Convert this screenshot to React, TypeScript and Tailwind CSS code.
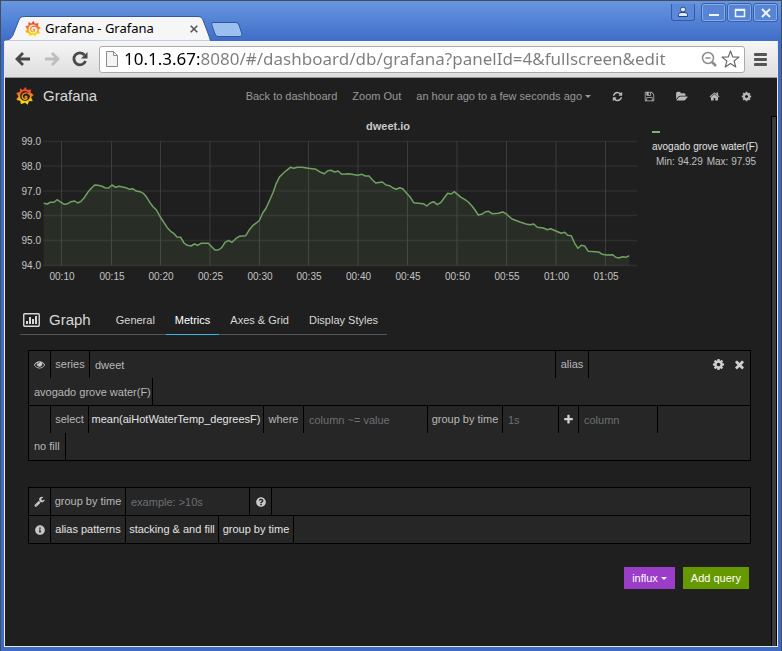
import type { ReactNode } from "react";
import { FaInfoCircle, FaQuestionCircle } from "react-icons/fa";

const ICONS = {
  refresh:
    "M1639 1056q0 5-1 7-64 268-268 434.5t-478 166.5q-146 0-282.5-55t-243.5-157l-129 129q-19 19-45 19t-45-19-19-45v-448q0-26 19-45t45-19h448q26 0 45 19t19 45-19 45l-137 137q71 66 161 102t187 36q134 0 250-65t186-179q11-17 53-117 8-23 30-23h192q13 0 22.5 9.5t9.5 22.5zm25-800v448q0 26-19 45t-45 19h-448q-26 0-45-19t-19-45 19-45l138-138q-148-137-349-137-134 0-250 65t-186 179q-11 17-53 117-8 23-30 23h-199q-13 0-22.5-9.5t-9.5-22.5v-7q65-268 270-434.5t480-166.5q146 0 284 55.5t245 156.5l130-129q19-19 45-19t45 19 19 45z",
  save: "M512 1536h768v-384h-768v384zm896 0h128v-896q0-14-10-38.5t-20-34.5l-281-281q-10-10-34-20t-39-10v416q0 40-28 68t-68 28h-576q-40 0-68-28t-28-68v-416h-128v1280h128v-416q0-40 28-68t68-28h832q40 0 68 28t28 68v416zm-384-928v-320q0-13-9.5-22.5t-22.5-9.5h-192q-13 0-22.5 9.5t-9.5 22.5v320q0 13 9.5 22.5t22.5 9.5h192q13 0 22.5-9.5t9.5-22.5zm640 32v928q0 40-28 68t-68 28h-1344q-40 0-68-28t-28-68v-1344q0-40 28-68t68-28h928q40 0 88 20t76 48l280 280q28 28 48 76t20 88z",
  folder:
    "M1815 952q0 31-31 66l-336 396q-43 51-120.5 86.5t-143.5 35.5h-1088q-34 0-60.5-13t-26.5-43q0-31 31-66l336-396q43-51 120.5-86.5t143.5-35.5h1088q34 0 60.5 13t26.5 43zm-343-344v160h-832q-94 0-197 47.5t-164 119.5l-337 396-5 6q0-4-.5-12.5t-.5-12.5v-960q0-92 66-158t158-66h320q92 0 158 66t66 158v32h544q92 0 158 66t66 158z",
  home: "M1472 992v480q0 26-19 45t-45 19h-384v-384h-256v384h-384q-26 0-45-19t-19-45v-480q0-1 .5-3t.5-3l575-474 575 474q1 2 1 6zm223-69l-62 74q-8 9-21 11h-3q-13 0-21-7l-692-577-692 577q-12 8-24 7-13-2-21-11l-62-74q-8-10-7-23.5t11-21.5l719-599q32-26 76-26t76 26l244 204v-195q0-14 9-23t23-9h192q14 0 23 9t9 23v408l219 182q10 8 11 21.5t-7 23.5z",
  cog: "M1152 896q0-106-75-181t-181-75-181 75-75 181 75 181 181 75 181-75 75-181zm512-109v222q0 12-8 23t-20 13l-185 28q-19 54-39 91 35 50 107 138 10 12 10 25t-9 23q-27 37-99 108t-94 71q-12 0-26-9l-138-108q-44 23-91 38-16 136-29 186-7 28-36 28h-222q-14 0-24.5-8.5t-11.5-21.5l-28-184q-49-16-90-37l-141 107q-10 9-25 9-14 0-25-11-126-114-165-168-7-10-7-23 0-12 8-23 15-21 51-66.5t54-70.5q-27-50-41-99l-183-27q-13-2-21-12.5t-8-23.5v-222q0-12 8-23t19-13l186-28q14-46 39-92-40-57-107-138-10-12-10-24 0-10 9-23 26-36 98.5-107.5t94.5-71.5q13 0 26 10l138 107q44-23 91-38 16-136 29-186 7-28 36-28h222q14 0 24.5 8.5t11.5 21.5l28 184q49 16 90 37l142-107q9-9 24-9 13 0 25 10 129 119 165 170 7 8 7 22 0 12-8 23-15 21-51 66.5t-54 70.5q26 50 41 98l183 28q13 2 21 12.5t8 23.5z",
  times:
    "M1490 1322q0 40-28 68l-136 136q-28 28-68 28t-68-28l-294-294-294 294q-28 28-68 28t-68-28l-136-136q-28-28-28-68t28-68l294-294-294-294q-28-28-28-68t28-68l136-136q28-28 68-28t68 28l294 294 294-294q28-28 68-28t68 28l136 136q28 28 28 68t-28 68l-294 294 294 294q28 28 28 68z",
  plus: "M1600 736v192q0 40-28 68t-68 28h-416v416q0 40-28 68t-68 28h-192q-40 0-68-28t-28-68v-416h-416q-40 0-68-28t-28-68v-192q0-40 28-68t68-28h416v-416q0-40 28-68t68-28h192q40 0 68 28t28 68v416h416q40 0 68 28t28 68z",
  eye: "M1664 960q-152-236-381-353 61 104 61 225 0 185-131.5 316.5t-316.5 131.5-316.5-131.5-131.5-316.5q0-121 61-225-229 117-381 353 133 205 333.5 326.5t434.5 121.5 434.5-121.5 333.5-326.5zm-720-384q0-20-14-34t-34-14q-125 0-214.5 89.5t-89.5 214.5q0 20 14 34t34 14 34-14 14-34q0-86 61-147t147-61q20 0 34-14t14-34zm848 384q0 34-20 69-140 230-376.5 368.5t-499.5 138.5-499.5-139-376.5-368q-20-35-20-69t20-69q140-229 376.5-368t499.5-139 499.5 139 376.5 368q20 35 20 69z",
  wrench:
    "M448 1472q0-26-19-45t-45-19-45 19-19 45 19 45 45 19 45-19 19-45zm644-420l-682 682q-37 37-90 37-52 0-91-37l-106-108q-38-36-38-90 0-53 38-91l681-681q39 98 114.5 173.5t173.5 114.5zm634-435q0 39-23 106-47 134-164.5 217.5t-258.5 83.5q-185 0-316.5-131.5t-131.5-316.5 131.5-316.5 316.5-131.5q58 0 121.5 16.5t107.5 46.5q16 11 16 28t-16 28l-293 169v224l193 107q5-3 79-48.5t135.5-81 70.5-35.5q15 0 23.5 10t8.5 25z",
};

function Icon({ name, className = "size-[11px]" }: { name: keyof typeof ICONS; className?: string }) {
  return (
    <svg viewBox="0 0 1792 1792" fill="currentColor" className={`shrink-0 ${className}`} aria-hidden="true">
      <path d={ICONS[name]} />
    </svg>
  );
}

function Logo({ id, className }: { id: string; className: string }) {
  return (
    <svg viewBox="0 0 36 36" className={`shrink-0 ${className}`} aria-hidden="true">
      <defs>
        <linearGradient id={id} x1="0" y1="0" x2="0" y2="36" gradientUnits="userSpaceOnUse">
          <stop offset="0.1" stopColor="#e8402a" />
          <stop offset="0.5" stopColor="#f58a1f" />
          <stop offset="0.9" stopColor="#fde407" />
        </linearGradient>
      </defs>
      <g fill="none" stroke={`url(#${id})`}>
        <path
          fill={`url(#${id})`}
          fillRule="evenodd"
          strokeWidth="0.5"
          d="M8 3L14 6L19 0L22 6L30 5L29 11L35 16L30 20L33 28L26 28L23 35L18 31L10 34L9 28L1 25L5 19L1 12L8 10ZM18 8A10 10 0 1 0 28 19A10 10 0 0 0 18 8Z"
        />
        <path
          strokeWidth="2.8"
          strokeLinecap="round"
          d="M27 15C23 10 14 11 12.500 17C12 22 15 25 18.500 24.500C22 24 23 20 20.500 18.500C19 18 18 19 18.500 20.500"
        />
      </g>
    </svg>
  );
}

const Caret = () => (
  <span className="ml-[3px] inline-block border-x-[3px] border-t-[3px] border-x-transparent border-t-current align-middle" />
);

function WindowButton({ label, children }: { label: string; children: ReactNode }) {
  return (
    <button
      aria-label={label}
      className="flex h-[17px] w-[23px] items-center justify-center rounded-[2px] border border-[#86abe6] bg-[#5784d3] outline outline-[#365fae]"
    >
      <svg viewBox="0 0 14 12" className="h-3 w-3.5" fill="none" stroke="#eef4ff" strokeWidth="2">
        {children}
      </svg>
    </button>
  );
}

function TitleBar() {
  return (
    <div className="flex h-[39px] shrink-0 items-start justify-between">
      <div className="flex items-end self-end">
        <div className="relative h-[25px] w-[207px]">
          <svg viewBox="0 0 208 25" preserveAspectRatio="none" className="absolute inset-0 size-full" aria-hidden="true">
            <path d="M0 25C5 24 7 23 9 19L15 4C16 1 18 .5 21 .5H194C197 .5 199 1 200 4L206 20C207 23 207 24 208 25Z" fill="#f6f6f6" stroke="#31569e" />
            <path d="M1 25H207" stroke="#f6f6f6" />
          </svg>
          <div className="relative flex h-full items-center pl-[21px] pr-[11px]">
            <Logo id="tabLogo" className="size-4" />
            <span className="ml-1 flex-1 whitespace-nowrap font-['Noto_Sans',sans-serif] text-[13px] text-black">Grafana - Grafana</span>
            <button aria-label="Close tab" className="flex size-3 items-center justify-center">
              <svg viewBox="0 0 8 8" className="size-2" stroke="#555" strokeWidth="1.6">
                <path d="M.7.7L7.300 7.300M7.300.7L.7 7.300" />
              </svg>
            </button>
          </div>
        </div>
        <button aria-label="New tab" className="mb-1 h-[15px] w-8">
          <svg viewBox="0 0 32 15" className="h-[15px] w-8">
            <path d="M2 .5H25Q27 .5 28 3L31 12Q31.500 14.500 29 14.500H7Q5 14.500 4 12L.8 3Q.3.500 2 .5Z" fill="#9bc0f0" stroke="#31569e" />
          </svg>
        </button>
      </div>
      <div className="flex gap-[3px] pr-px pt-0.5">
        <button aria-label="Profile" className="mr-1 flex h-[17px] w-6 items-center justify-center rounded-b-[3px] border border-t-0 border-[#325aa8] bg-[#5b89d8]">
          <svg viewBox="0 0 12 12" className="size-3" fill="#dce8fb" stroke="#2b4478">
            <path d="M1.500 10.500V8.500Q1.500 7 4 6.500H8Q10.500 7 10.500 8.500V10.500Z" />
            <circle cx="6" cy="3.500" r="2.500" />
          </svg>
        </button>
        <WindowButton label="Minimize">
          <path d="M2 8H12" />
        </WindowButton>
        <WindowButton label="Maximize">
          <path d="M2.500 2.500H11.500V9.500H2.500Z" strokeWidth="1.500" />
          <path d="M2 3H12" />
        </WindowButton>
        <WindowButton label="Close">
          <path d="M3 2L11 10M11 2L3 10" />
        </WindowButton>
      </div>
    </div>
  );
}

function Toolbar() {
  return (
    <div className="flex h-[37px] shrink-0 items-center border-b border-[#9a9a9a] bg-linear-to-b from-[#f6f6f6] to-[#dedede] pl-2.5 pr-2.5">
      <button aria-label="Back">
        <svg viewBox="0 0 16 14" className="h-3.5 w-4" fill="none" stroke="#484848" strokeWidth="2.800">
          <path d="M15 7H2.500M8 1L2 7L8 13" />
        </svg>
      </button>
      <button aria-label="Forward" className="ml-[13px]">
        <svg viewBox="0 0 16 14" className="h-3.5 w-4" fill="none" stroke="#bdbdbd" strokeWidth="2.800">
          <path d="M1 7H13.500M8 1L14 7L8 13" />
        </svg>
      </button>
      <button aria-label="Reload" className="ml-3">
        <svg viewBox="0 0 16 16" className="size-4" fill="none" stroke="#484848" strokeWidth="2.800">
          <path d="M12.500 4A6 6 0 1 0 13.500 10" />
          <path d="M15.500 1V7.500H9Z" fill="#484848" stroke="none" />
        </svg>
      </button>
      <div className="ml-[11px] flex h-[27px] min-w-0 flex-1 items-center rounded-[3px] border border-[#aaa] bg-white pl-1.5 pr-1">
        <svg viewBox="0 0 12 16" className="h-4 w-3 shrink-0" fill="#f4f4f4" stroke="#8a8a8a">
          <path d="M.5.5H7.500L11.500 4.500V15.500H.5ZM7.500.5V4.500H11.500" />
        </svg>
        <input
          aria-label="Address"
          defaultValue="10.1.3.67:8080/#/dashboard/db/grafana?panelId=4&fullscreen&edit"
          className="ml-1.5 min-w-0 flex-1 bg-linear-to-r from-black from-[75px] to-[#7d7d7d] to-[75px] bg-clip-text font-['Noto_Sans',sans-serif] text-[17px] text-transparent caret-black outline-none"
        />
        <svg viewBox="0 0 16 16" className="size-4 shrink-0" fill="none" stroke="#8c8c8c" strokeWidth="1.500">
          <circle cx="7" cy="7" r="5.500" />
          <path d="M4.500 7H9.500" />
          <path d="M11 11L15 15" strokeWidth="2.500" />
        </svg>
        <button aria-label="Bookmark" className="ml-1">
          <svg viewBox="0 0 20 19" className="h-[18px] w-[19px]" fill="#fff" stroke="#666" strokeWidth="1.200" strokeLinejoin="round">
            <path d="M10 1L12.300 7.200L19 7.500L13.800 11.600L15.600 18L10 14.300L4.400 18L6.200 11.600L1 7.500L7.700 7.200Z" />
          </svg>
        </button>
      </div>
      <button aria-label="Menu" className="ml-[9px] flex w-[13px] flex-col gap-0.5">
        <span className="h-[3px] rounded-[1px] bg-[#555]" />
        <span className="h-[3px] rounded-[1px] bg-[#555]" />
        <span className="h-[3px] rounded-[1px] bg-[#555]" />
      </button>
    </div>
  );
}

function NavBar() {
  return (
    <nav className="flex h-9 items-center pl-[11px] pr-[19px] text-[#999]">
      <Logo id="navLogo" className="size-[18px]" />
      <span className="ml-[9px] flex-1 text-[15px] text-[#d8d8d8]">Grafana</span>
      <a href="#dashboard">Back to dashboard</a>
      <a href="#zoom" className="ml-[15px]">Zoom Out</a>
      <button className="ml-[15px]">
        an hour ago to a few seconds ago
        <Caret />
      </button>
      <div className="ml-[21px] flex gap-[21px] text-[#b8b8b8]">
        <button aria-label="Refresh"><Icon name="refresh" /></button>
        <button aria-label="Save"><Icon name="save" /></button>
        <button aria-label="Open"><Icon name="folder" className="h-[11px] w-3" /></button>
        <button aria-label="Home"><Icon name="home" /></button>
        <button aria-label="Settings"><Icon name="cog" /></button>
      </div>
    </nav>
  );
}

const SERIES =
  "43.700,203.300 47.300,204 50,202.300 54,202.300 57,199.700 60,201.700 64.300,204.300 67.700,203.700 71,201.700 74.700,201 77.700,203 81,201.300 84.300,197.700 88,192 91.300,188.300 94.700,185 98,185.300 102,186.300 105,187.700 108.700,188 112,185 115.700,187.300 119,186.300 126,187.700 129.300,189.300 132.700,188.700 136,191 140,191.700 143.300,193.300 146.700,197.300 150,202.700 153.300,207 156.700,210.300 160.300,217 164,222.700 167.300,227.700 170.700,231.300 174,233.700 177,237 180.700,237.300 184,243 187.300,245.300 191,246 194.300,244 197.700,245.300 201,243.300 208.300,243.300 211.700,246.700 215,250 218.300,250 221.700,247.700 225,242.300 228.700,240.300 232,242.300 235.700,238.700 239.300,236.300 245.700,235.700 249,230.300 252.700,225.700 259.300,220.500 262.700,213 266,208.300 269.300,201 273,192.700 276.300,183.300 279.700,176.700 283.300,173.300 286.700,170.300 290.300,167.300 293.700,168.300 297.300,167.300 301.700,167.300 308.300,168.300 316,169.300 320.700,172.300 324.300,173.700 327.700,170.700 331,170.300 334.700,172 338,171 341.700,174.300 349,173.700 357.300,175.300 362,174.300 365.300,176 369,176 372.300,179.700 375.700,183 382.300,182 386,185 389.700,185.700 393,188 396.300,189.300 399.700,187.700 403,189 406.700,193.300 410.300,197.300 413.700,202.700 423.300,203.700 426.700,206 430.300,203 433.700,201.700 437.300,204.700 441,202.300 444.300,197.700 447.700,193.300 451.300,194 454.300,191.700 461,197.300 464.700,199.300 468.300,202 472,206 475,210 478.300,215 481.700,214.300 485,212 488.700,211.300 492,213.700 498.300,213.300 502.700,212 506,213.700 512,219 520,222 526,224 530,224.700 533.700,224 537.300,227.300 543.300,228 547.300,229.700 550.700,228.700 554.300,230.300 561,233.300 564.700,232.300 567.700,235.300 571.300,235.700 574.700,243.300 578,248.300 581.300,245.300 584.700,246 588.300,251.300 598.700,252 602.300,254.300 606.700,255 612.700,254.700 615.700,257.300 619,258 622.300,256.700 626,257.300 629.300,255.700";

const Y_TICKS = [
  [141.5, "99.0"], [166, "98.0"], [191, "97.0"], [215.5, "96.0"], [240.5, "95.0"], [265.5, "94.0"],
] as const;
const X_TICKS = [
  [61.5, "00:10"], [111.5, "00:15"], [160.5, "00:20"], [210, "00:25"], [259.5, "00:30"], [308.5, "00:35"],
  [358, "00:40"], [407.5, "00:45"], [457, "00:50"], [506.5, "00:55"], [556, "01:00"], [605.5, "01:05"],
] as const;

function Chart() {
  return (
    <svg viewBox="16 134 624 150" className="block w-full" fontSize="10" fill="#c4c4c4" role="img" aria-label="dweet.io graph">
      {Y_TICKS.map(([y, label]) => (
        <g key={label}>
          <path d={`M43 ${y}H637`} stroke="#2e2e2e" strokeWidth="1.600" />
          <text x="41" y={y + 3.5} textAnchor="end">{label}</text>
        </g>
      ))}
      {X_TICKS.map(([x, label]) => (
        <g key={label}>
          <path d={`M${x} 141V266`} stroke="#3d3d3d" />
          <text x={x + 0.5} y="280" textAnchor="middle">{label}</text>
        </g>
      ))}
      <polygon points={`43.700,265.500 ${SERIES} 629.300,265.500`} fill="#7eb26d" fillOpacity="0.1" />
      <polyline points={SERIES} fill="none" stroke="#6fa261" strokeWidth="1.500" strokeLinejoin="round" />
    </svg>
  );
}

function GraphPanel() {
  return (
    <section className="pt-1">
      <h2 className="text-center text-[11px] font-bold leading-4 text-[#c8c8c8]">dweet.io</h2>
      <div className="flex pl-[11px]">
        <div className="min-w-0 flex-1">
          <Chart />
        </div>
        <div className="-mt-[3px] w-[131px] shrink-0 pl-3 text-[10px] leading-[15px]">
          <div className="mb-1.5 h-0.5 w-2 bg-[#7eb26d]" />
          <div className="whitespace-nowrap text-[#e3e3e3]">avogado grove water(F)</div>
          <div className="flex gap-1 whitespace-nowrap pl-1 text-[#c0c0c0]">
            <span>Min: 94.29</span>
            <span>Max: 97.95</span>
          </div>
        </div>
      </div>
    </section>
  );
}

function EditorTabs() {
  return (
    <div className="ml-[15px] mt-[22px] flex h-[29px] w-fit items-stretch border-b border-[#555]">
      <div className="flex items-center pl-[3px] pr-4 text-[#d8d8d8]">
        <svg viewBox="0 0 17 14" className="h-3.5 w-[17px]" fill="none" stroke="currentColor">
          <rect x=".75" y=".75" width="15.500" height="12.500" rx="1" strokeWidth="1.400" />
          <path d="M4 11V8M7 11V4M10 11V6M13 11V3" strokeWidth="2" />
        </svg>
        <h1 className="ml-[9px] text-[15px]">Graph</h1>
      </div>
      <div role="tablist" className="flex gap-0.5 text-[#d8d8d8]">
        <button role="tab" className="px-[9px]">General</button>
        <button role="tab" aria-selected="true" className="-mb-px border-b border-b-[#33b5e5] px-[9px] text-white">Metrics</button>
        <button role="tab" className="px-[9px]">Axes &amp; Grid</button>
        <button role="tab" className="px-[9px]">Display Styles</button>
      </div>
    </div>
  );
}

const cell = "flex h-[27px] shrink-0 items-center justify-center whitespace-nowrap border-r border-black";
const iconCell = "flex h-[27px] w-[22px] shrink-0 items-center justify-center border-r border-black text-[#c8c8c8]";
const field = "h-[27px] min-w-0 border-r border-black bg-transparent pl-[5px] outline-none placeholder:text-[#6a7075]";

function QueryEditor() {
  return (
    <section className="ml-[23px] mr-5 mt-[15px] border-x border-t border-black bg-[#262626] text-[#b8b8b8]">
      <div className="border-b border-black">
        <div className="flex">
          <button aria-label="Toggle query" className={iconCell}><Icon name="eye" /></button>
          <label htmlFor="series" className={`${cell} w-[39px]`}>series</label>
          <input id="series" defaultValue="dweet" className={`${field} flex-1`} />
          <label htmlFor="alias" className={`${cell} w-[33px]`}>alias</label>
          <div className="flex w-[161px] items-center justify-end gap-2 pr-1 text-[#d0d0d0]">
            <button aria-label="Query options"><Icon name="cog" className="size-[13px]" /></button>
            <button aria-label="Remove query"><Icon name="times" className="size-[13px]" /></button>
          </div>
        </div>
        <input id="alias" defaultValue="avogado grove water(F)" className={`${field} block w-[124px]`} />
      </div>
      <div className="border-b border-black">
        <div className="flex">
          <div className={iconCell} />
          <label htmlFor="fn" className={`${cell} w-[38px]`}>select</label>
          <button id="fn" className={`${cell} w-[175px] text-[#e3e3e3]`}>mean(aiHotWaterTemp_degreesF)</button>
          <label htmlFor="where" className={`${cell} w-10`}>where</label>
          <input id="where" placeholder="column ~= value" className={`${field} w-[124px]`} />
          <label htmlFor="interval" className={`${cell} w-[75px]`}>group by time</label>
          <input id="interval" placeholder="1s" className={`${field} w-14`} />
          <button aria-label="Add column" className={`${cell} w-5 text-[#d0d0d0]`}>
            <Icon name="plus" />
          </button>
          <input aria-label="Group by column" placeholder="column" className={`${field} w-[79px]`} />
        </div>
        <button className={`${cell} px-[5px]`}>no fill</button>
      </div>
    </section>
  );
}

function QueryOptions() {
  return (
    <section className="ml-[23px] mr-5 mt-[26px] border-x border-t border-black bg-[#262626] text-[#b8b8b8]">
      <div className="flex border-b border-black">
        <div className={iconCell}><Icon name="wrench" /></div>
        <label htmlFor="minInterval" className={`${cell} w-[75px]`}>group by time</label>
        <input id="minInterval" placeholder="example: >10s" className={`${field} w-[124px]`} />
        <button aria-label="Help" className={iconCell}><FaQuestionCircle size={10} /></button>
      </div>
      <div className="flex border-b border-black text-[#e3e3e3]">
        <div className={iconCell}><FaInfoCircle size={10} /></div>
        <a href="#alias" className={`${cell} w-[75px]`}>alias patterns</a>
        <a href="#stacking" className={`${cell} w-[93px]`}>stacking &amp; and fill</a>
        <a href="#group" className={`${cell} w-[75px]`}>group by time</a>
      </div>
    </section>
  );
}

export default function App() {
  return (
    <div className="flex min-h-screen flex-col border border-b-0 border-[#454d5c] bg-[#3f6cc6] bg-linear-to-b from-[#6797e0] to-[#3d6bc7] to-[42px] font-['Liberation_Sans',Arial,sans-serif] text-[11px]">
      <div className="flex flex-1 flex-col px-[3px] pb-1 pt-px">
        <TitleBar />
        <div className="flex flex-1 flex-col border border-t-0 border-[#e8e8e8]">
          <Toolbar />
          <div className="flex flex-1 bg-[#1f1f1f]">
            <main className="min-w-0 flex-1">
              <NavBar />
              <GraphPanel />
              <EditorTabs />
              <QueryEditor />
              <QueryOptions />
              <div className="mr-[22px] mt-[23px] flex justify-end gap-2 text-white">
                <button className="h-[22px] bg-[#9b3dc8] px-2">
                  influx
                  <Caret />
                </button>
                <button className="h-[22px] bg-[#669900] px-2">Add query</button>
              </div>
            </main>
            <div className="mt-[38px] w-1.5 border border-b-0 border-black bg-[#3b3b3b]" />
          </div>
        </div>
      </div>
    </div>
  );
}
